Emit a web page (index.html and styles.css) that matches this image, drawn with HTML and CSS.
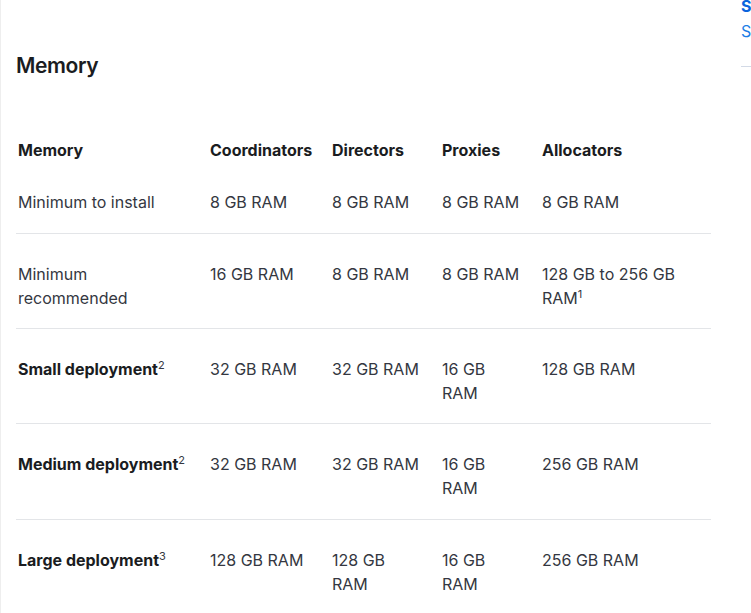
FILE: index.html
```html
<!DOCTYPE html>
<html>
<head>
<meta charset="utf-8">
<link rel="stylesheet" href="styles.css">
</head>
<body>
<div class="page">
  <main class="content">
    <h2 class="title">Memory</h2>
    <table class="mem">
      <colgroup>
        <col class="c1"><col class="c2"><col class="c3"><col class="c4"><col class="c5">
      </colgroup>
      <thead>
        <tr><th>Memory</th><th>Coordinators</th><th>Directors</th><th>Proxies</th><th>Allocators</th></tr>
      </thead>
      <tbody>
        <tr class="first"><td>Minimum to install</td><td>8 GB RAM</td><td>8 GB RAM</td><td>8 GB RAM</td><td>8 GB RAM</td></tr>
        <tr><td>Minimum recommended</td><td>16 GB RAM</td><td>8 GB RAM</td><td>8 GB RAM</td><td>128 GB to 256 GB RAM<sup>1</sup></td></tr>
        <tr><td><strong>Small deployment</strong><sup>2</sup></td><td>32 GB RAM</td><td>32 GB RAM</td><td>16 GB RAM</td><td>128 GB RAM</td></tr>
        <tr class="fourth"><td><strong>Medium deployment</strong><sup>2</sup></td><td>32 GB RAM</td><td>32 GB RAM</td><td>16 GB RAM</td><td>256 GB RAM</td></tr>
        <tr class="last"><td><strong>Large deployment</strong><sup>3</sup></td><td>128 GB RAM</td><td>128 GB RAM</td><td>16 GB RAM</td><td>256 GB RAM</td></tr>
      </tbody>
    </table>
  </main>
  <aside class="side">
    <div class="side-title">Sections</div>
    <div class="side-link">Small</div>
  </aside>
</div>
</body>
</html>
```
FILE: styles.css
```css
html, body {
  margin: 0;
  padding: 0;
  background: #ffffff;
}
body {
  font-family: Inter, "Noto Sans", sans-serif;
  color: #343741;
  overflow: hidden;
  height: 613px;
}
.page {
  display: flex;
  height: 613px;
}
.content {
  width: 725px;
  border-left: 1px solid #eeeeee;
  padding-left: 15px;
  flex: none;
}
.title {
  margin: 50px 0 0 0;
  font-size: 21px;
  line-height: 32px;
  font-weight: 600;
  color: #1a1c21;
  letter-spacing: -0.4px;
}
.mem {
  margin-top: 48px;
  width: 695px;
  table-layout: fixed;
  border-collapse: collapse;
  font-size: 16px;
  line-height: 24px;
}
.c1 { width: 192px; }
.c2 { width: 122px; }
.c3 { width: 110px; }
.c4 { width: 100px; }
.c5 { width: 171px; }
.mem th {
  text-align: left;
  font-weight: 700;
  color: #1a1c21;
  padding: 8px 16px 0 2px;
  vertical-align: top;
}
.mem td {
  padding: 28px 16px 18px 2px;
  vertical-align: top;
  border-bottom: 1px solid #e3e5e8;
}
.mem tr.first td {
  padding-bottom: 19px;
}
.mem tr.fourth td {
  padding-bottom: 19px;
}
.mem tr.last td {
  border-bottom: none;
}
.mem strong {
  font-weight: 700;
  color: #1a1c21;
}
.mem sup {
  font-size: 11px;
  line-height: 0;
  vertical-align: 6px;
}
.side {
  flex: 1;
  overflow: hidden;
  white-space: nowrap;
}
.side-title {
  font-size: 16px;
  line-height: 12px;
  font-weight: 700;
  color: #0b64dd;
  height: 12px;
}
.side-link {
  margin-top: 7px;
  font-size: 16px;
  line-height: 24px;
  color: #1d7ee6;
  padding-bottom: 23px;
  border-bottom: 1px solid #d3dae6;
}
```
